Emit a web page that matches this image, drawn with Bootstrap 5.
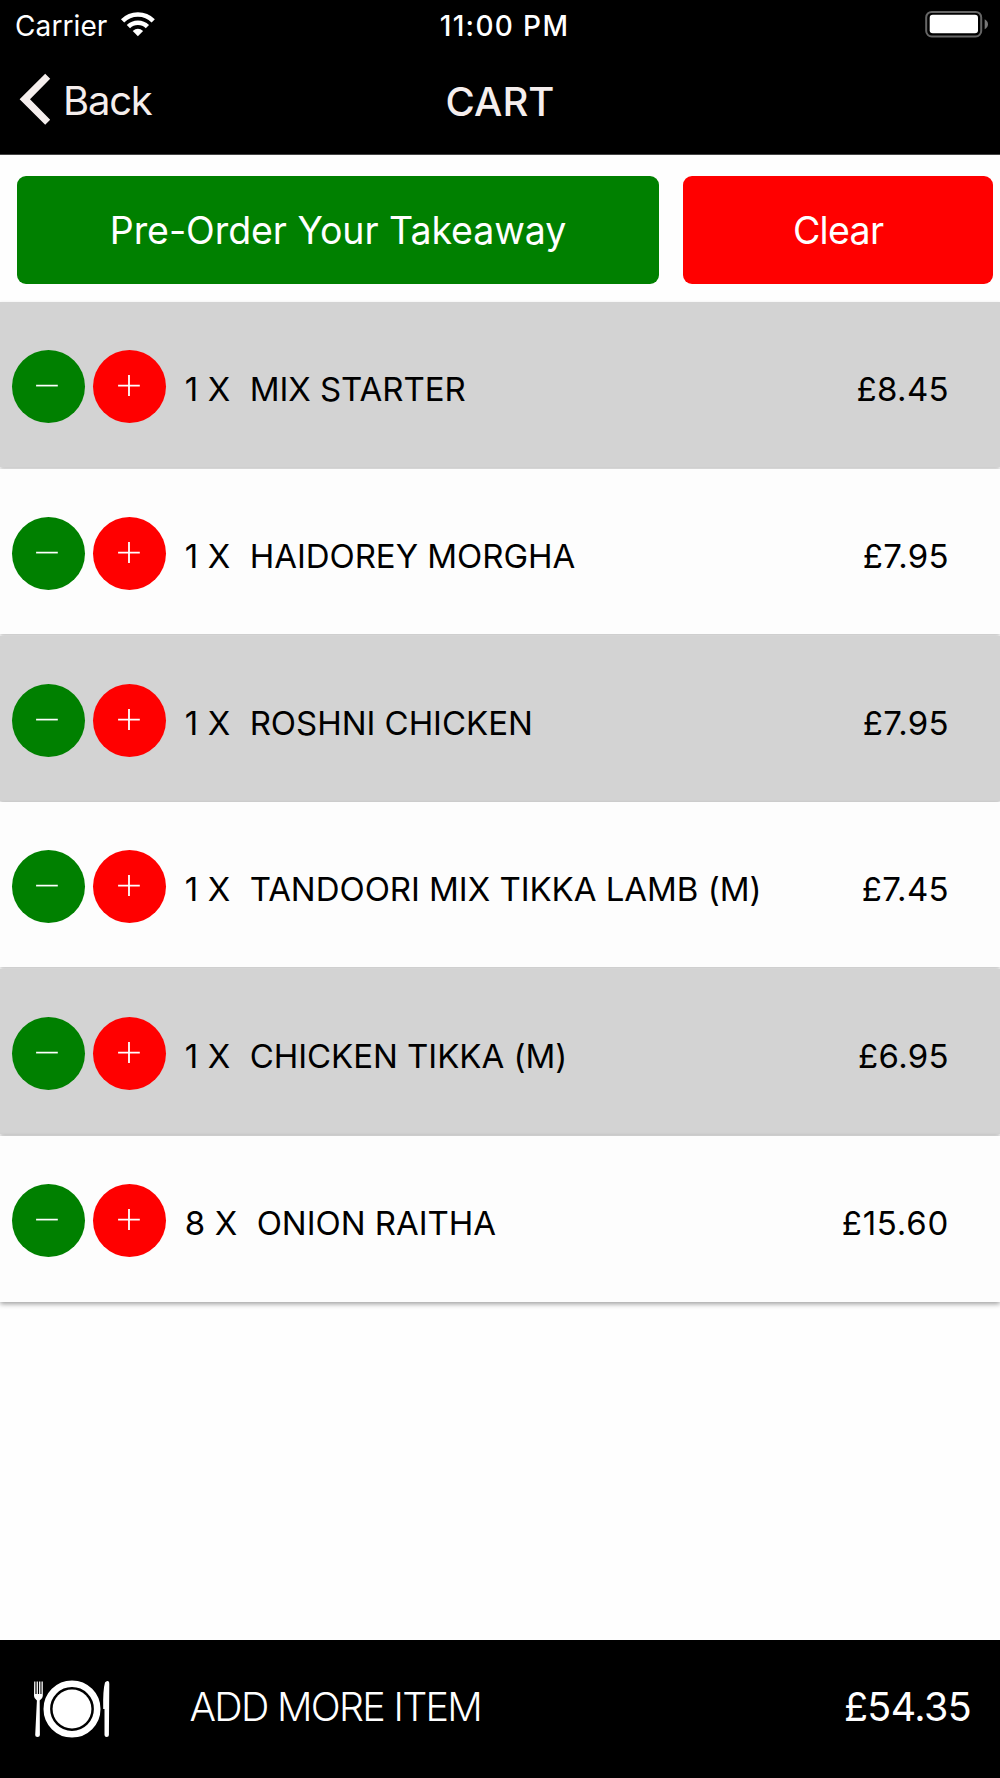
<!DOCTYPE html>
<html lang="en">
<head>
<meta charset="utf-8">
<meta name="viewport" content="width=device-width, initial-scale=1">
<title>Cart</title>
<link href="https://cdn.jsdelivr.net/npm/bootstrap@5.3.0/dist/css/bootstrap.min.css" rel="stylesheet">
<style>
body{font-family:Inter,"Liberation Sans",sans-serif;background:#fefefe;color:#000;height:1778px;overflow:hidden}
svg{display:block;flex:none}
.bar-grid{display:grid;grid-template-columns:1fr auto 1fr;align-items:center}
.app-head{background:#000;height:155px;border-bottom:1px solid #444}
.status{height:50px;padding:0 11px 0 15px;font-size:28px;line-height:34px;color:#fff}
.status .carrier{letter-spacing:.1px;padding-top:1px}
.status .wifi{margin-left:13px;margin-bottom:2px}
.status .battery{margin-bottom:2px}
.status .clock{font-weight:500;letter-spacing:1.35px;margin-left:5px;padding-top:1px}
.topnav{height:103px;padding:0 19px;font-size:40px;line-height:48px;color:#f5eeed}
.topnav .back{gap:12px;color:inherit;letter-spacing:-1.25px;font-weight:400}
.topnav .back svg{margin-bottom:6px}
.topnav .back span{margin-bottom:1px}
.topnav .title{font-size:40px;font-weight:500;margin:0;line-height:48px}
.actions{padding:20.5px 7.2px 18.5px 17px;gap:24.3px}
.actions .btn{height:108px;border:0;border-radius:9px;font-size:37.5px;color:#fff;padding:1.5px 0 0;line-height:108px}
.btn.go,.btn.go:hover{background:#008000;flex:642 1 0;letter-spacing:-.06px}
.btn.stop,.btn.stop:hover{background:#f00;flex:309.3 1 0;letter-spacing:-.7px}
.lines{display:flex;flex-direction:column;gap:1.75px}
.lines .line{height:165.05px;background:#fdfdfd;box-shadow:0 2px 4px rgba(0,0,0,.23);padding:48px 51px 0 12px;font-size:33px;line-height:78px}
.lines .line:nth-child(odd){background:#d3d3d3}
.lines .line:last-child{height:166px;box-shadow:0 2px 5px rgba(0,0,0,.38)}
.qty{width:73px;height:73px;border-radius:50%;border:0;padding:0;display:flex;align-items:center;justify-content:center;flex:none}
.qty.less{background:#008000;margin-right:8.3px}
.qty.more{background:#f00;margin-right:18.4px}
.line .dish,.line .count{white-space:pre}
.line .count{word-spacing:.4px}
.line .dish{letter-spacing:-.04px}
.line .cost{letter-spacing:.35px}
.line:last-child .cost{letter-spacing:.75px}
.foot{background:#000;color:#fff;height:138px;padding:0 29px 0 33px;font-size:39.4px;line-height:48px}
.foot .add{margin-left:78.5px;padding-bottom:4.5px;font-weight:300;letter-spacing:-1.68px}
.foot .total{padding-bottom:4.5px;font-weight:400;letter-spacing:-.6px}
</style>
</head>
<body class="d-flex flex-column">
<header class="app-head flex-shrink-0">
  <div class="status bar-grid">
    <div class="d-flex align-items-center">
      <span class="carrier">Carrier</span>
      <svg class="wifi" width="36" height="26" viewBox="120 11 36 26">
        <g fill="none" stroke="#fff" stroke-width="4.6"><path d="M122.6 20.9A21.6 21.6 0 0 1 153.2 20.9"/><path d="M128.4 26.7A13.4 13.4 0 0 1 147.4 26.7"/></g>
        <path fill="#fff" d="M137.9 36.3L132.7 31Q137.9 26.4 143.1 31Z"/>
      </svg>
    </div>
    <span class="clock">11:00 PM</span>
    <svg class="battery ms-auto" width="64" height="28" viewBox="925 10 64 28">
      <rect x="926.2" y="11.9" width="55" height="24.6" rx="5.5" fill="none" stroke="#666" stroke-width="2"/>
      <rect x="929.7" y="14.8" width="48.3" height="18.5" rx="3" fill="#fff"/>
      <path d="M984.7 19.2Q988 21 988 24.2T984.7 29.2Z" fill="#777"/>
    </svg>
  </div>
  <nav class="topnav bar-grid">
    <a class="back d-flex align-items-center text-decoration-none" href="#">
      <svg width="32" height="54" viewBox="19 71.5 32 54"><path fill="#f5eeed" d="M45.2 73.2L50.2 78.2L30 98.7L50.2 119.3L45.2 124.3L19.6 98.7Z"/></svg>
      <span>Back</span>
    </a>
    <h1 class="title">CART</h1>
  </nav>
</header>

<section class="actions d-flex flex-shrink-0">
  <button class="btn go" type="button">Pre-Order Your Takeaway</button>
  <button class="btn stop" type="button">Clear</button>
</section>

<main class="lines flex-shrink-0" id="lines"></main>

<footer class="foot d-flex align-items-center mt-auto flex-shrink-0">
  <svg width="78" height="60" viewBox="33 1679 78 60" fill="#fff">
    <path d="M34.2 1681.5H35.4V1694H36.6V1681.5H37.9V1694H39.1V1681.5H40.4V1694H41.5V1681.5H42.8V1696Q42.8 1698.5 39.7 1700.5L39.9 1735Q39.9 1737 37.5 1737T35.2 1735L36.9 1700.5Q34 1698.5 34 1696Z"/>
    <circle cx="72" cy="1709" r="25.2" fill="none" stroke="#fff" stroke-width="6.6"/>
    <circle cx="72" cy="1709" r="19.4"/>
    <path d="M104.5 1709H103.2Q102.8 1690 105 1682.5Q106 1680.8 108 1681Q109.5 1681.5 109.3 1684L108.9 1735Q108.9 1737 106.7 1737T104.5 1735Z"/>
  </svg>
  <span class="add">ADD MORE ITEM</span>
  <span class="total ms-auto">£54.35</span>
</footer>

<script>
const items=[[1,"MIX STARTER","8.45"],[1,"HAIDOREY MORGHA","7.95"],[1,"ROSHNI CHICKEN","7.95"],[1,"TANDOORI MIX TIKKA LAMB (M)","7.45"],[1,"CHICKEN TIKKA (M)","6.95"],[8,"ONION RAITHA","15.60"]];
document.getElementById('lines').innerHTML=items.map(([n,name,p])=>`
<div class="line d-flex align-items-start">
<button class="qty less" type="button" aria-label="Remove one"><svg width="73" height="73" viewBox="0 0 73 73"><path d="M24.1 35.6H45.8" stroke="#fff" stroke-width="1.7"/></svg></button>
<button class="qty more" type="button" aria-label="Add one"><svg width="73" height="73" viewBox="0 0 73 73"><path d="M25.1 35.7H46.8M36 25V46" fill="none" stroke="#fff" stroke-width="1.8"/></svg></button>
<span class="count">${n} X  </span><span class="dish">${name}</span><span class="cost ms-auto">£${p}</span>
</div>`).join('');
</script>
<script src="https://cdn.jsdelivr.net/npm/bootstrap@5.3.0/dist/js/bootstrap.bundle.min.js"></script>
</body>
</html>
